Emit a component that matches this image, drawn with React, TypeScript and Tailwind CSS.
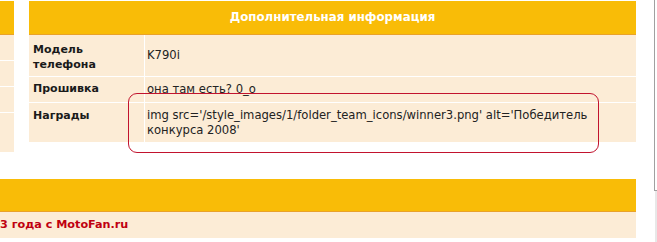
export default function App() {
  const font = { fontFamily: '"DejaVu Sans", Verdana, sans-serif' };
  return (
    <div className="relative w-[657px] h-[242px] overflow-hidden bg-white text-[11px]" style={font}>
      <div className="flex pt-px">
        {/* left column stub */}
        <div className="w-[14px] flex flex-col">
          <div className="h-[34px] bg-[#f9bc07] border-b border-[#e9a22a]" />
          <div className="h-[26px] bg-[#fcecd6] border-b border-white" />
          <div className="h-[26px] bg-[#fcecd6] border-b border-white" />
          <div className="h-[26px] bg-[#fcecd6] border-b border-white" />
          <div className="h-[39px] bg-[#fcecd6]" />
        </div>

        {/* info table */}
        <div className="ml-[15px] w-[607px] flex flex-col">
          <div className="h-[34px] bg-[#f9bc07] border-b border-[#e9a22a] flex items-center justify-center text-white font-bold text-[11.8px]">
            Дополнительная информация
          </div>
          <div className="flex h-[42px] border-b border-white">
            <div className="w-[116px] bg-[#fcecd6] border-r border-white pl-[4px] pt-[7px] font-bold text-[#1a1a1a] leading-[15px]">
              Модель<br />телефона
            </div>
            <div className="flex-1 bg-[#fcecd6] pl-[2px] flex items-center text-[#222] text-[11.6px]">K790i</div>
          </div>
          <div className="flex h-[26px] border-b border-white">
            <div className="w-[116px] bg-[#fcecd6] border-r border-white pl-[4px] flex items-center font-bold text-[#1a1a1a]">
              Прошивка
            </div>
            <div className="flex-1 bg-[#fcecd6] pl-[2px] flex items-center text-[#222] text-[11.6px]">она там есть? 0_o</div>
          </div>
          <div className="flex h-[39px]">
            <div className="w-[116px] bg-[#fcecd6] border-r border-white pl-[4px] pt-[5px] font-bold text-[#1a1a1a] leading-[15px]">
              Награды
            </div>
            <div className="flex-1 bg-[#fcecd6] pl-[2px] pt-[5px] leading-[15px] text-[#222] text-[11.6px]">
              img src='/style_images/1/folder_team_icons/winner3.png' alt='Победитель
              <br />
              конкурса 2008'
            </div>
          </div>
        </div>
      </div>

      {/* second block */}
      <div className="mt-[27px] w-[636px]">
        <div className="h-[33px] bg-[#f9bc07] border-b border-[#e9a22a]" />
        <div className="h-[26px] bg-[#fcecd6] flex items-center font-bold text-[#c00010] text-[11.2px]">
          3 года с MotoFan.ru
        </div>
      </div>

      {/* annotation */}
      <div className="absolute left-[128px] top-[93px] w-[471px] h-[60px] border border-[#c2132e] rounded-[9px]" />

      {/* window edge */}
      <div className="absolute left-[654px] top-0 w-px h-[191px] bg-[#a0a0a0]" />
      <div className="absolute left-[655px] top-[190px] w-[2px] h-[52px] bg-[#e8e8e8] border-t border-[#a0a0a0]" />
    </div>
  );
}
